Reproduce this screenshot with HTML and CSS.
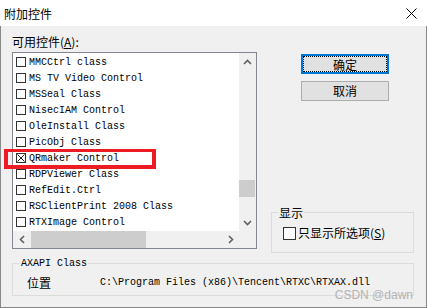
FILE: index.html
```html
<!DOCTYPE html>
<html lang="zh-CN">
<head>
    <meta charset="UTF-8">
    <meta name="viewport" content="width=device-width, initial-scale=1.0">
    <title>附加控件</title>
    <link rel="stylesheet" href="styles.css">
</head>
<body>
    <div class="window">
        <div class="titlebar">
            <span class="title">附加控件</span>
            <svg class="close" width="11" height="11" viewBox="0 0 11 11">
                <path d="M0.5 0.5 L10.5 10.5 M10.5 0.5 L0.5 10.5" stroke="#000" stroke-width="1"/>
            </svg>
        </div>
        <div class="client">
            <div class="main">
                <div class="left">
                    <div class="label">可用控件(<u>A</u>):</div>
                    <div class="listbox">
                        <div class="list-area">
                            <ul class="items">
                                <li><span class="cb"></span>MMCCtrl class</li>
                                <li><span class="cb"></span>MS TV Video Control</li>
                                <li><span class="cb"></span>MSSeal Class</li>
                                <li><span class="cb"></span>NisecIAM Control</li>
                                <li><span class="cb"></span>OleInstall Class</li>
                                <li><span class="cb"></span>PicObj Class</li>
                                <li><span class="cb checked"><svg width="8" height="8" viewBox="0 0 8 8"><path d="M0.5 0.5 L7.5 7.5 M7.5 0.5 L0.5 7.5" stroke="#222" stroke-width="1"/></svg></span>QRmaker Control</li>
                                <li><span class="cb"></span>RDPViewer Class</li>
                                <li><span class="cb"></span>RefEdit.Ctrl</li>
                                <li><span class="cb"></span>RSClientPrint 2008 Class</li>
                                <li><span class="cb"></span>RTXImage Control</li>
                            </ul>
                            <div class="vscroll">
                                <div class="arrow">
                                    <svg width="9" height="6" viewBox="0 0 9 6"><path d="M1 5 L4.5 1.5 L8 5" fill="none" stroke="#606060" stroke-width="1.6"/></svg>
                                </div>
                                <div class="vtrack"><div class="vthumb"></div></div>
                                <div class="arrow">
                                    <svg width="9" height="6" viewBox="0 0 9 6"><path d="M1 1 L4.5 4.5 L8 1" fill="none" stroke="#606060" stroke-width="1.6"/></svg>
                                </div>
                            </div>
                        </div>
                        <div class="hscroll-row">
                            <div class="hscroll">
                                <div class="arrow">
                                    <svg width="6" height="9" viewBox="0 0 6 9"><path d="M5 1 L1.5 4.5 L5 8" fill="none" stroke="#606060" stroke-width="1.6"/></svg>
                                </div>
                                <div class="htrack"><div class="hthumb"></div></div>
                                <div class="arrow">
                                    <svg width="6" height="9" viewBox="0 0 6 9"><path d="M1 1 L4.5 4.5 L1 8" fill="none" stroke="#606060" stroke-width="1.6"/></svg>
                                </div>
                            </div>
                            <div class="corner"></div>
                        </div>
                    </div>
                </div>
                <div class="right">
                    <button class="btn btn-default"><span class="focus">确定</span></button>
                    <button class="btn">取消</button>
                    <div class="group show-group">
                        <span class="group-label">显示</span>
                        <label class="check"><span class="box"></span>只显示所选项(<u>S</u>)</label>
                    </div>
                </div>
            </div>
            <div class="group info-group">
                <span class="group-label mono">AXAPI Class</span>
                <div class="info-row">
                    <span class="info-key">位置</span>
                    <span class="mono">C:\Program Files (x86)\Tencent\RTXC\RTXAX.dll</span>
                </div>
            </div>
        </div>
        <div class="highlight"></div>
        <div class="watermark">CSDN @dawn</div>
    </div>
</body>
</html>
```

FILE: styles.css
```css
body {
    margin: 0;
    padding: 0;
    font-family: "Noto Sans CJK SC", "Liberation Sans", sans-serif;
    font-size: 12px;
    color: #000;
}

.window {
    position: relative;
    width: 427px;
    height: 308px;
    background-color: #f0f0f0;
    overflow: hidden;
}

.titlebar {
    height: 26px;
    background: #fff;
    display: flex;
    align-items: center;
    justify-content: space-between;
    padding: 0 10px 0 4px;
}

.title {
    font-size: 12px;
    line-height: 16px;
    margin-top: 1px;
}

.close {
    display: block;
    margin-top: 1px;
}

.client {
    height: 282px;
    box-sizing: border-box;
    border: 1px solid #888;
    border-top: none;
    padding: 8px 12px 0 11px;
}

.main {
    display: flex;
}

.left {
    width: 245px;
}

.label {
    height: 16px;
    line-height: 16px;
    margin-bottom: 2px;
}

.mono {
    font-family: "Liberation Mono", "DejaVu Sans Mono", monospace;
    font-size: 10px;
}

/* list box */
.listbox {
    height: 197px;
    box-sizing: border-box;
    border: 1px solid #828790;
    background: #fff;
    display: flex;
    flex-direction: column;
}

.list-area {
    height: 178px;
    display: flex;
}

.items {
    flex: 1;
    list-style: none;
    margin: 0;
    padding: 1px 0 0 3px;
    overflow: hidden;
}

.items li {
    height: 16px;
    display: flex;
    align-items: center;
    font-family: "Liberation Mono", "DejaVu Sans Mono", monospace;
    font-size: 10px;
    white-space: pre;
}

.cb {
    width: 10px;
    height: 10px;
    box-sizing: border-box;
    border: 1px solid #333;
    margin-right: 3px;
    display: flex;
}

.cb svg {
    display: block;
}

.vscroll {
    width: 17px;
    background: #f0f0f0;
    display: flex;
    flex-direction: column;
}

.arrow {
    width: 17px;
    height: 17px;
    display: flex;
    align-items: center;
    justify-content: center;
    flex-shrink: 0;
}

.vtrack {
    flex: 1;
}

.vthumb {
    margin: 110px 1px 0 0;
    height: 17px;
    background: #cdcdcd;
}

.hscroll-row {
    height: 17px;
    display: flex;
}

.hscroll {
    flex: 1;
    display: flex;
    background: #f0f0f0;
}

.htrack {
    flex: 1;
}

.hthumb {
    margin: 0 0 0 1px;
    width: 115px;
    height: 17px;
    background: #cdcdcd;
}

.corner {
    width: 17px;
    background: #f0f0f0;
}

/* right column */
.right {
    width: 143px;
    margin-left: 14px;
    display: flex;
    flex-direction: column;
}

.btn {
    margin-left: 30px;
    width: 88px;
    height: 20px;
    padding: 0;
    background: #e1e1e1;
    border: 1px solid #adadad;
    font-family: "Noto Sans CJK SC", sans-serif;
    font-size: 12px;
    color: #000;
    line-height: 16px;
    cursor: pointer;
}

.btn-default {
    margin-top: 20px;
    border: 2px solid #0078d7;
    margin-bottom: 7px;
}

.focus {
    display: block;
    height: 100%;
    box-sizing: border-box;
    border: 1px dotted #000;
}

.group {
    border: 1px solid #dcdcdc;
    box-sizing: border-box;
}

.group-label {
    display: block;
    width: fit-content;
    background: #f0f0f0;
    padding: 0 1px;
}

.show-group {
    margin-top: 111px;
    height: 41px;
}

.show-group .group-label {
    margin: -7px 0 0 6px;
    line-height: 14px;
}

.check {
    display: flex;
    align-items: center;
    height: 14px;
    line-height: 14px;
    margin: 6px 0 0 11px;
}

.box {
    width: 13px;
    height: 13px;
    box-sizing: border-box;
    border: 1px solid #333;
    background: #fff;
    margin-right: 2px;
}

/* bottom info */
.info-group {
    margin-top: 10px;
    height: 33px;
}

.info-group .group-label {
    margin: -6px 0 0 7px;
    line-height: 12px;
}

.info-row {
    display: flex;
    align-items: center;
    height: 16px;
    margin-top: 4px;
    padding-left: 14px;
}

.info-key {
    width: 73px;
    font-size: 12px;
}

.highlight {
    position: absolute;
    left: 4px;
    top: 149px;
    width: 152px;
    height: 20px;
    box-sizing: border-box;
    border: 4px solid #ed1c24;
    border-top-width: 3px;
}

.watermark {
    position: absolute;
    right: 14px;
    top: 288px;
    font-family: "Liberation Sans", Arial, sans-serif;
    font-size: 12px;
    line-height: 14px;
    color: #b4b4b4;
}
```
